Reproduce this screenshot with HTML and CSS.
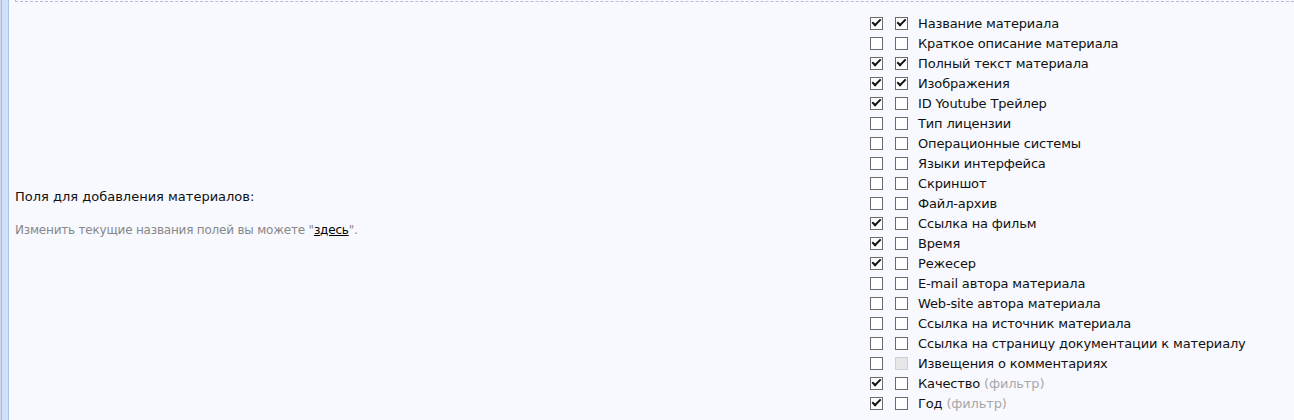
FILE: index.html
```
<!DOCTYPE html>
<html lang="ru">
<head>
    <meta charset="UTF-8">
    <title>Поля для добавления материалов</title>
    <link rel="stylesheet" href="styles.css">
</head>
<body>
    <div class="side-strip"></div>
    <div class="settings">
        <div class="prev-row"></div>
        <div class="field-row">
            <div class="field-label">
                <div class="label-title">Поля для добавления материалов:</div>
                <div class="label-hint">Изменить текущие названия полей вы можете "<a href="#">здесь</a>".</div>
            </div>
            <div class="field-list">
                <div class="item"><span class="cb on"></span><span class="cb on"></span>Название материала</div>
                <div class="item"><span class="cb"></span><span class="cb"></span>Краткое описание материала</div>
                <div class="item"><span class="cb on"></span><span class="cb on"></span>Полный текст материала</div>
                <div class="item"><span class="cb on"></span><span class="cb on"></span>Изображения</div>
                <div class="item"><span class="cb on"></span><span class="cb"></span>ID Youtube Трейлер</div>
                <div class="item"><span class="cb"></span><span class="cb"></span>Тип лицензии</div>
                <div class="item"><span class="cb"></span><span class="cb"></span>Операционные системы</div>
                <div class="item"><span class="cb"></span><span class="cb"></span>Языки интерфейса</div>
                <div class="item"><span class="cb"></span><span class="cb"></span>Скриншот</div>
                <div class="item"><span class="cb"></span><span class="cb"></span>Файл-архив</div>
                <div class="item"><span class="cb on"></span><span class="cb"></span>Ссылка на фильм</div>
                <div class="item"><span class="cb on"></span><span class="cb"></span>Время</div>
                <div class="item"><span class="cb on"></span><span class="cb"></span>Режесер</div>
                <div class="item"><span class="cb"></span><span class="cb"></span>E-mail автора материала</div>
                <div class="item"><span class="cb"></span><span class="cb"></span>Web-site автора материала</div>
                <div class="item"><span class="cb"></span><span class="cb"></span>Ссылка на источник материала</div>
                <div class="item"><span class="cb"></span><span class="cb"></span>Ссылка на страницу документации к материалу</div>
                <div class="item"><span class="cb"></span><span class="cb disabled"></span>Извещения о комментариях</div>
                <div class="item"><span class="cb on"></span><span class="cb"></span>Качество&nbsp;<span class="note">(фильтр)</span></div>
                <div class="item"><span class="cb on"></span><span class="cb"></span>Год&nbsp;<span class="note">(фильтр)</span></div>
            </div>
        </div>
    </div>
</body>
</html>
```

FILE: styles.css
```
body {
    margin: 0;
    display: flex;
    min-height: 420px;
    background: #f7f9fe;
    color: #111;
    font-family: 'DejaVu Sans', Tahoma, sans-serif;
    font-size: 13px;
    overflow: hidden;
}

.side-strip {
    width: 7px;
    flex-shrink: 0;
    border-left: 1px solid #c9d5ea;
    border-right: 1px solid #a9c4ea;
    background: #cfe0f7;
    box-shadow: inset 1px 0 0 #a8bddc;
}

.settings {
    flex: 1;
}

.prev-row {
    margin-left: 6px;
    height: 1px;
    border-left: 1px dashed #b3bbe0;
    border-bottom: 1px dashed #b3bbe0;
}

.field-row {
    display: flex;
    padding-top: 11px;
}

.field-label {
    width: 859px;
    padding-left: 6px;
    box-sizing: border-box;
    display: flex;
    flex-direction: column;
    justify-content: center;
}

.label-title {
    margin-bottom: 19px;
}

.label-hint {
    font-size: 12px;
    letter-spacing: -0.2px;
    color: #888;
}

.label-hint a {
    color: #000;
}

.field-list {
    padding-left: 2px;
    letter-spacing: -0.15px;
}

.item {
    display: flex;
    align-items: center;
    height: 20px;
    white-space: nowrap;
}

.cb {
    position: relative;
    width: 11px;
    height: 11px;
    border: 1px solid #6b6b6b;
    background: #fff;
    margin-right: 12px;
    flex-shrink: 0;
}

.cb + .cb {
    margin-right: 10px;
}

.cb.on::after {
    content: '';
    position: absolute;
    left: 3px;
    top: -1px;
    width: 3px;
    height: 7px;
    border: solid #111;
    border-width: 0 2.5px 2.5px 0;
    transform: rotate(45deg);
}

.cb.disabled {
    border-color: #cfcfcf;
    background: #e6e6e6;
}

.note {
    color: #a8a8a8;
}
```
